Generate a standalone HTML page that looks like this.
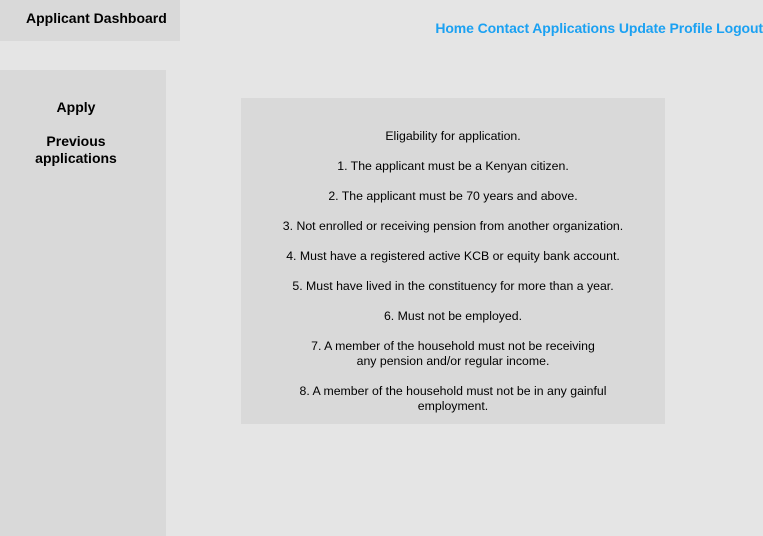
<!DOCTYPE html>
<html><head><meta charset="utf-8"><style>
*{margin:0;padding:0;box-sizing:border-box}
body{width:763px;height:536px;background:#e5e5e5;font-family:"Liberation Sans",Arial,sans-serif;position:relative;overflow:hidden;color:#000}
.hdr{position:absolute;left:26px;top:0;width:141px;height:41px;font-weight:bold;font-size:14px;line-height:37px;white-space:nowrap}
.hbg{position:absolute;left:0;top:0;width:180px;height:41px;background:#d9d9d9}
.nav{position:absolute;right:0;top:20px;font-weight:bold;font-size:14px;color:#1ba1f2;white-space:nowrap;letter-spacing:-0.1px}
.side{position:absolute;left:0;top:70px;width:166px;height:466px;background:#d9d9d9;font-weight:bold;font-size:14px;text-align:center}
.side div{position:absolute;left:0;width:152px}
.box{position:absolute;left:241px;top:98px;width:424px;height:326px;background:#d9d9d9;font-size:12.3px;text-align:center}
.box div{position:absolute;left:0;width:100%;line-height:15px}
</style></head><body>
<div class="hbg"></div>
<div class="hdr">Applicant Dashboard</div>
<div class="nav">Home Contact Applications Update Profile Logout</div>
<div class="side">
<div style="top:29px">Apply</div>
<div style="top:63px;line-height:17px">Previous<br>applications</div>
</div>
<div class="box">
<div style="top:31px">Eligability for application.</div>
<div style="top:61px">1. The applicant must be a Kenyan citizen.</div>
<div style="top:91px">2. The applicant must be 70 years and above.</div>
<div style="top:121px">3. Not enrolled or receiving pension from another organization.</div>
<div style="top:151px">4. Must have a registered active KCB or equity bank account.</div>
<div style="top:181px">5. Must have lived in the constituency for more than a year.</div>
<div style="top:211px">6. Must not be employed.</div>
<div style="top:241px">7. A member of the household must not be receiving<br>any pension and/or regular income.</div>
<div style="top:286px">8. A member of the household must not be in any gainful<br>employment.</div>
</div>
</body></html>
